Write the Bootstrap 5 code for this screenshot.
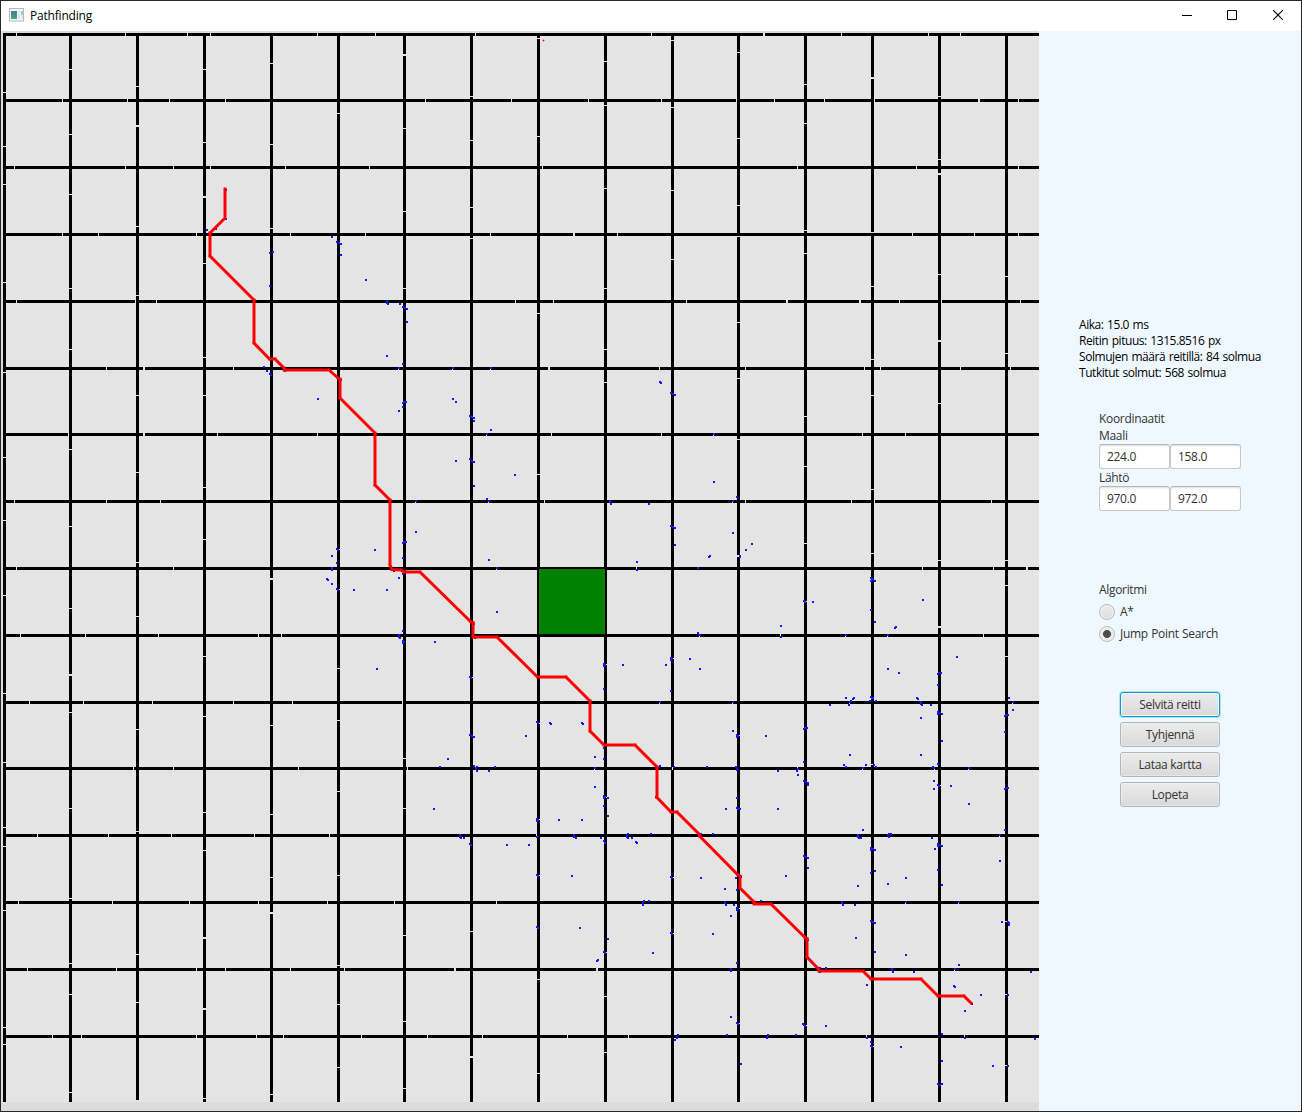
<!DOCTYPE html>
<html lang="fi">
<head>
<meta charset="utf-8">
<meta name="viewport" content="width=device-width, initial-scale=1">
<title>Pathfinding</title>
<link href="https://cdn.jsdelivr.net/npm/bootstrap@5.3.0/dist/css/bootstrap.min.css" rel="stylesheet">
<style>
  html, body { height: 100%; overflow: hidden; }
  body { font-family: "Open Sans", "Noto Sans", sans-serif; font-size: 12px; line-height: 16px; color: #333; letter-spacing: -.32px; word-spacing: .6px; }
  .app-window { width: 1302px; height: 1112px; border: 1px solid #26282c; background: #f0f8ff; }
  .titlebar { height: 30px; background: #fff; color: #000; padding-left: 8px; }
  .titlebar svg { display: block; }
  .titlebar .app-icon { margin: 7px 6px 0 0; }
  .title-text { margin-top: 7px; letter-spacing: -.2px; }
  .win-btn { width: 46px; height: 28px; }
  .win-btn:first-child { width: 44px; }
  .map-pane { width: 1038px; height: 1080px; background: #dcdcdc; }
  .map-pane svg { display: block; }
  .side { width: 262px; padding: 286px 0 0 40px; }
  .stats { color: #000; height: 94px; letter-spacing: -.45px; word-spacing: .9px; }
  .group { padding-left: 20px; }
  .coords { height: 171px; }
  .algo { height: 110px; }
  .algo-title { margin-bottom: 3px; }
  .coords label { height: 17px; line-height: 17px; }
  .coords .form-control { width: 71px; height: 25px; min-height: 0; padding: 0 7px; font-size: 12px; line-height: 23px; color: #333; letter-spacing: -.3px; border: 1px solid #c8c8c8; border-top-color: #b5b5b5; border-radius: 3px; box-shadow: inset 0 2px 2px -1px #ddd; }
  .form-check { min-height: 0; height: 22px; margin: 0; padding: 0; }
  .form-check .form-check-input { float: none; width: 16px; height: 16px; margin: 0 5px 0 0; border: 1px solid #b9b9b9; background: linear-gradient(#ececec, #dcdcdc); box-shadow: inset 0 0 0 1px #f5f5f5; }
  .form-check .form-check-input:checked { background: radial-gradient(circle, #4d4d4d 3.6px, #e8e8e8 4.3px); }
  .actions { gap: 5px; padding-left: 41px; }
  .actions .btn { width: 100px; height: 25px; padding: 0; font-size: 12px; line-height: 23px; color: #333; letter-spacing: -.3px; border: 1px solid #b5b5b5; border-radius: 3px; background: linear-gradient(#ececec, #d9d9d9); box-shadow: inset 0 0 0 1px #f3f3f380; }
  .actions .btn.is-focused { border-color: #039ed3; box-shadow: 0 0 0 1px #b5e0f2, inset 0 0 0 1px #f6f6f6; }
</style>
</head>
<body>
<div class="app-window d-flex flex-column">
  <header class="titlebar d-flex align-items-start flex-shrink-0">
    <svg class="app-icon" width="15" height="14" viewBox="0 0 15 14"><rect x=".5" y=".5" width="14" height="12.5" fill="#f4f5f6" stroke="#b4b9bd"/><defs><linearGradient id="ic" x2="0" y2="1"><stop stop-color="#45789a"/><stop offset="1" stop-color="#4fa679"/></linearGradient></defs><rect x="2" y="3" width="6" height="8" fill="url(#ic)"/><path d="M9 3h2v8H9z" fill="#dfe2e4"/><path d="M12 3h2v2h-2z" fill="#a9bfe0"/><path d="M12 5h2v2h-2z" fill="#9bcdb3"/><path d="M12 7h2v4h-2z" fill="#e3e6e8"/></svg>
    <span class="title-text">Pathfinding</span>
    <div class="d-flex ms-auto">
      <div class="win-btn d-flex align-items-center justify-content-center"><svg width="10" height="10"><path d="M0 5.5h10" stroke="#000"/></svg></div>
      <div class="win-btn d-flex align-items-center justify-content-center"><svg width="10" height="10"><path d="M.5.5h9v9h-9z" fill="none" stroke="#000"/></svg></div>
      <div class="win-btn d-flex align-items-center justify-content-center"><svg width="10" height="10"><path d="M0 0l10 10M10 0L0 10" stroke="#000" stroke-width="1.1"/></svg></div>
    </div>
  </header>
  <main class="d-flex flex-grow-1">
    <div class="map-pane">
      <svg id="map" width="1038" height="1080" viewBox="1 31 1038 1080">
        <rect x="3" y="33" width="1036" height="1069" fill="#e4e4e4"/>
        <path id="walls" fill="#000" shape-rendering="crispEdges"/>
        <path id="gaps" fill="#e4e4e4" shape-rendering="crispEdges"/>
        <rect x="539" y="569" width="66" height="65" fill="#008000"/>
        <path id="nodes" fill="#1414ff" shape-rendering="crispEdges"/>
        <path d="M542 40h3v1h-3zM543 39h1v3h-1z" fill="#ff8c8c"/><path d="M543 40h1v1h-1z" fill="#f00"/>
        <path id="route" fill="none" stroke="#f00" stroke-width="3" stroke-linecap="square"/>
      </svg>
    </div>
    <aside class="side">
      <div class="stats">
        <div>Aika: 15.0 ms</div>
        <div>Reitin pituus: 1315.8516 px</div>
        <div>Solmujen määrä reitillä: 84 solmua</div>
        <div>Tutkitut solmut: 568 solmua</div>
      </div>
      <div class="group coords">
        <div>Koordinaatit</div>
        <label class="d-block" for="gx">Maali</label>
        <div class="d-flex"><input id="gx" class="form-control" value="224.0"><input class="form-control" value="158.0" aria-label="Maali y"></div>
        <label class="d-block" for="sx">Lähtö</label>
        <div class="d-flex"><input id="sx" class="form-control" value="970.0"><input class="form-control" value="972.0" aria-label="Lähtö y"></div>
      </div>
      <div class="group algo">
        <div class="algo-title">Algoritmi</div>
        <div class="form-check d-flex align-items-center"><input class="form-check-input" type="radio" name="alg" id="a1"><label for="a1">A*</label></div>
        <div class="form-check d-flex align-items-center"><input class="form-check-input" type="radio" name="alg" id="a2" checked><label for="a2">Jump Point Search</label></div>
      </div>
      <div class="actions d-flex flex-column">
        <button class="btn is-focused" type="button">Selvitä reitti</button>
        <button class="btn" type="button">Tyhjennä</button>
        <button class="btn" type="button">Lataa kartta</button>
        <button class="btn" type="button">Lopeta</button>
      </div>
    </aside>
  </main>
</div>
<script src="https://cdn.jsdelivr.net/npm/bootstrap@5.3.0/dist/js/bootstrap.bundle.min.js"></script>
<script>
const rect = (x, y, w, h) => `M${x} ${y}h${w}v${h}h${-w}z`;
const setD = (id, d) => document.getElementById(id).setAttribute('d', d);

// Openings in each wall: position, with "w" marking a two-pixel opening
const rows = {
  33: '16 125 187 210 317 375 475 651 763w 841 928 960',
  99: '62 127 169 225 425 511 588 661 736 774 824 874 978w 1018',
  166: '14 125 173 210 285 369 542 797 916 1018',
  233: '62 98 196 290 365 490 573w 617 912 974 1018',
  300: '16 135 156 387 515 553 686 786w 859w 899 941 1020',
  367: '106 143w 233 398 452 490 548w 659 745 864 880 960 1010',
  433: '68 143w 217 317 486 551 661 713 862 905',
  500: '14 106 160 415 488 544 732 745 851 874 991',
  567: '16 173 496 636 922 993 1026w',
  634: '20 85 158 258 281 699 780 845 887 983',
  701: '29 83 152 233 292 402 659 732 849 1012',
  767: '133 173 298 407 594 672 797 862 934 968',
  834: '37 108 171 254 329 536 999',
  901: '18 112 189 258 327 394 496 905 958',
  968: '27 116 196 225 290 344 454w 596w 954',
  1035: '52 81 196 256 283 361 427 482 567 628 866 964'
};
const cols = {
  3: '92 146 184 282 372 457 520 595 693 762 827 846 910 1027 1044',
  69: '69 134 194 288 349 449 526 608 674w 712 808 898 963 994 1092',
  136: '86 125w 226 295 395 472 562 616 729 831 954 1002 1100w',
  203: '69 142 196w 263 357 395 487 539 656 716 812 850 937w 1008w 1098',
  270: '63 144 228 578w 725 814 877 912w 1094',
  337: '113 549 589 668 720 791 875 965 1004 1067',
  403: '54w 128 211 288 758 808 935 1021 1088',
  470: '96 140 207 238 677 931 1056w',
  537: '38 136 313 474 723 819 875 979 1073',
  604: '61 105 188 288 349 382 664 797 952 996 1052',
  671: '40 107 190 259 658 877 933',
  737: '52 138 205 236 322 378 439 555w 735 908 1023',
  804: '84 123 230 253 416 466 543 601 1025',
  871: '77w 232 286 359 395 489 553 764 1046',
  938: '96 159 173w 274 340w 403 560 626w 785',
  1005: '276 353 560 585 656 921 994 1065'
};
let walls = '', gaps = '';
for (const y in rows) {
  walls += rect(3, y, 1036, 3);
  rows[y].split(' ').forEach(g => gaps += rect(parseInt(g), y, g.endsWith('w') ? 2 : 1, 3));
}
for (const x in cols) {
  walls += rect(x, 33, 3, 1069);
  cols[x].split(' ').forEach(g => gaps += rect(x, parseInt(g), 3, g.endsWith('w') ? 2 : 1));
}
setD('walls', walls);
setD('gaps', gaps);

// Explored nodes per map tile, in thirds of a pixel from the tile's corner
const tiles = [
 [0,0,'678,569 678,656 621,690 648,687 996,711 1011,727 1017,729 1023,732 1023,765 811,759 818,756 810,858'],
 [350,0,'48,840'],
 [0,290,'792,231 801,243 810,252 813,254 1023,270 954,327 1011,777 1013,780 996,798 1011,819 996,834 996,840 981,867 984,870 996,882 1011,897 1015,900 855,242'],
 [350,290,'111,34 111,38 114,42 150,42 159,51 165,54 171,57 171,96 111,198 159,222 147,235 308,235 422,235 159,339 163,336 168,336 159,351 147,363 309,327 318,336 361,379 367,381 372,384 372,393 423,420 410,433 318,513 361,508 366,512 372,516 495,555 372,588 411,628 416,632 198,633 198,726 159,759 163,756 168,756 75,780 159,804 417,810 440,834 147,864 132,842 159,852 12,900 111,900 441,966 159,1023 147,1036 147,1041 150,1044 159,1053 159,1058 162,1056 255,1056 81,1137 361,1161 364,1163 372,1002 374,1043 931,276 933,279 963,309 968,312 974,315 780,633 780,637 783,642 897,642 963,708 968,711 974,714 975,765 861,816 861,840 1044,834 1044,1029 1047,1035 963,1104 963,1109 966,1106 1020,1107 948,1125 819,1125 762,1122 762,1128 765,1125 762,1197 963,1203 930,1236'],
 [700,290,'42,432 42,576 111,621 99,633 99,729 156,762 138,780 30,798 27,801 120,798 120,801 512,864 517,867 520,870 513,873 525,873 312,933 315,936 339,936 669,930 513,960 525,996 588,1011 585,1014 243,1008 243,1041 438,1035 564,1035 0,1035 0,1137 564,1137 597,1149 771,1101 714,1152 718,1149 723,1149 714,1185 438,1224 462,1224 459,1227 453,1233 450,1236 447,1245 390,1245 512,1221 516,1225 520,1225 510,1233 528,1233 651,1224 654,1227 662,1237 662,1242 666,1245 693,1245 927,1224 939,1236 99,1236'],
 [350,700,'561,66 564,70 600,69 603,72 696,69 699,72 528,108 361,105 367,108 372,111 294,177 270,201 372,198 378,204 378,208 381,201 381,213 417,213 435,201 252,327 762,144 762,177 735,171 735,204 735,261 762,289 762,294 765,291 774,294 762,318 774,348 930,198 927,201 972,201 918,291 561,357 561,362 564,360 627,360 696,360 330,405 330,410 333,414 342,414 361,433 364,435 471,435 537,435 561,410 673,405 673,410 678,414 753,414 762,423 765,428 831,405 831,410 834,402 834,414 846,414 858,426 861,429 903,402 561,525 564,528 666,528 963,531 966,534 879,609 879,614 882,603 897,603 561,681 564,684 690,684 963,699 966,702 774,717 762,756 765,758 744,780 741,783 909,759 984,1005 981,1010 981,1015 975,1020'],
 [700,700,'939,30 663,54 714,37 714,42 719,39 725,42 915,48 919,45 925,45 915,96 99,93 111,105 111,110 114,107 198,108 312,87 316,84 321,84 312,186 726,123 450,165 663,165 432,195 438,201 498,195 522,195 528,201 489,204 699,201 702,204 714,192 807,204 21,201 108,201 111,206 111,210 234,213 291,213 294,206 294,225 312,243 317,246 323,249 323,254 702,243 702,267 714,256 717,258 753,258 915,267 920,264 925,264 807,312 111,294 111,324 115,326 120,327 78,327 234,327 489,390 474,405 474,410 478,414 483,414 564,405 566,411 568,402 573,402 696,414 714,433 714,438 719,435 725,438 705,447 915,390 900,405 900,483 513,445 513,450 518,447 525,450 312,468 317,470 323,474 324,504 525,513 513,519 714,510 258,528 39,402 3,402 3,534 108,534 122,530 618,534 474,558 564,552 726,555 75,567 111,570 75,606 75,610 78,615 102,615 183,603 111,624 111,630 114,627 93,648 426,606 426,610 429,615 465,615 618,606 777,606 39,702 468,714 513,663 518,665 525,669 525,756 618,765 906,666 923,666 927,670 927,675 323,720 777,795 765,807 111,789 93,807 93,812 361,804 378,804 360,815 576,807 576,811 579,816 642,816 993,816 501,855 762,858 765,861 843,885 923,885 816,912 795,933 93,951 111,969 114,972 309,972 313,976 315,978 378,978 81,1005 204,1005 201,1010 201,1015 288,1005 501,1014 513,1026 513,1038 517,1040 603,1041 726,1002 795,1014 1005,1017 726,1083 123,1092 879,1098 923,1098 714,1152 719,1155 726,1152']
];
setD('nodes', tiles.map(([ox, oy, pts]) => pts.split(' ').map(p => {
  const [x, y] = p.split(',').map(Number);
  return rect(ox + Math.round((x - 3) / 3), oy + Math.round((y - 3) / 3), 2, 2);
}).join('')).join(''));

// Route: one capped segment between each pair of jump points
const route = '225,189 225,218 210,233 210,256 254,300 254,343 269.5,359 275,359 284,368 284,370 329,370 338,378 340,379 340,398 375,433 375,485 390,500 390,565 392,569.5 401,570 404,572 420,572 470.5,621.5 473,622.5 473,637 497,637 537.5,677 566,677 590,701 590,731 604,745 635,745 657,767 657,797.5 671,812 677,812 699,834 699.5,836 738,875 740,876 740,888 754,902 754,904 771,904 805,937.5 807,938.5 807,957 818,968.5 819,971 863,971 871,979 921,979 938,996 964,996 971,1003'.split(' ');
setD('route', route.slice(1).map((p, i) => `M${route[i]}L${p}`).join(''));
</script>
</body>
</html>
